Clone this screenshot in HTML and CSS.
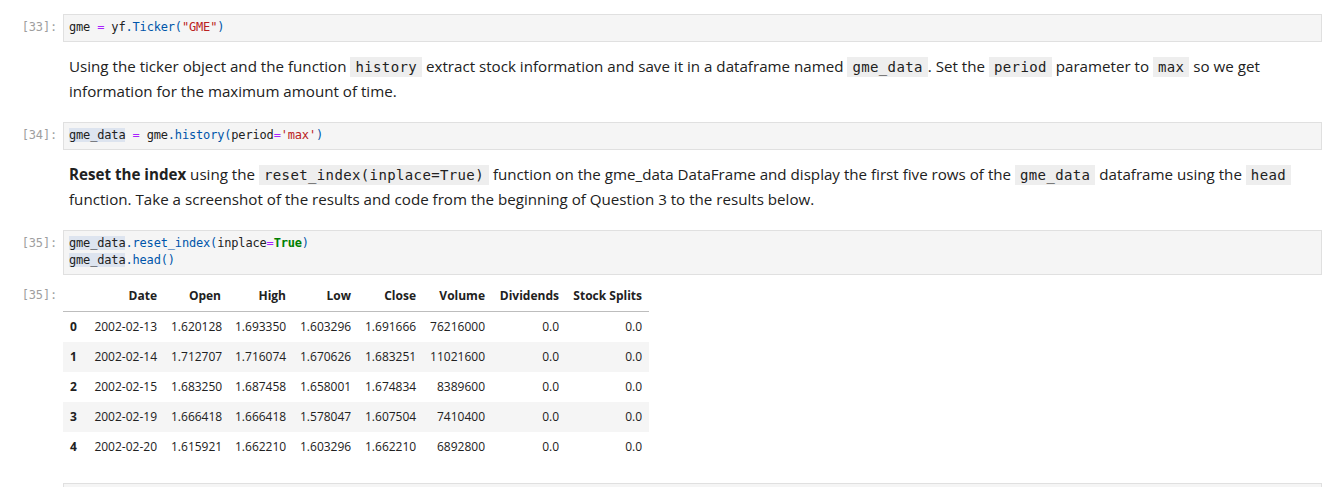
FILE: index.html
```html
<!DOCTYPE html>
<html lang="en">
<head>
<meta charset="utf-8">
<title>Notebook</title>
<link rel="stylesheet" href="styles.css">
</head>
<body>
<div class="notebook">

  <div class="cell code-cell">
    <div class="prompt">[33]:</div>
    <div class="input"><div class="line"><span class="v">gme</span> <span class="op">=</span> <span class="v">yf</span><span class="p">.</span><span class="pr">Ticker</span><span class="p">(</span><span class="s">"GME"</span><span class="p">)</span></div></div>
  </div>

  <div class="cell md-cell">
    <div class="prompt"></div>
    <div class="md"><p>Using the ticker object and the function <code>history</code> extract stock information and save it in a dataframe named <code>gme_data</code>. Set the <code>period</code> parameter to <code>max</code> so we get information for the maximum amount of time.</p></div>
  </div>

  <div class="cell code-cell">
    <div class="prompt">[34]:</div>
    <div class="input"><div class="line"><span class="v hl">gme_data</span> <span class="op">=</span> <span class="v">gme</span><span class="p">.</span><span class="pr">history</span><span class="p">(</span><span class="v">period</span><span class="op">=</span><span class="s">'max'</span><span class="p">)</span></div></div>
  </div>

  <div class="cell md-cell">
    <div class="prompt"></div>
    <div class="md"><p><strong>Reset the index</strong> using the <code>reset_index(inplace=True)</code> function on the gme_data DataFrame and display the first five rows of the <code>gme_data</code> dataframe using the <code>head</code> function. Take a screenshot of the results and code from the beginning of Question 3 to the results below.</p></div>
  </div>

  <div class="cell code-cell">
    <div class="prompt">[35]:</div>
    <div class="input"><div class="line"><span class="v hl">gme_data</span><span class="p">.</span><span class="pr">reset_index</span><span class="p">(</span><span class="v">inplace</span><span class="op">=</span><span class="kw">True</span><span class="p">)</span></div><div class="line"><span class="v hl">gme_data</span><span class="p">.</span><span class="pr">head</span><span class="p">()</span></div></div>
  </div>

  <div class="cell output-cell">
    <div class="prompt out-prompt">[35]:</div>
    <div class="output">
      <table class="df">
        <thead>
          <tr>
            <th class="c0"></th>
            <th class="c1">Date</th>
            <th class="c2">Open</th>
            <th class="c3">High</th>
            <th class="c4">Low</th>
            <th class="c5">Close</th>
            <th class="c6">Volume</th>
            <th class="c7">Dividends</th>
            <th class="c8">Stock Splits</th>
          </tr>
        </thead>
        <tbody>
          <tr><th>0</th><td>2002-02-13</td><td>1.620128</td><td>1.693350</td><td>1.603296</td><td>1.691666</td><td>76216000</td><td>0.0</td><td>0.0</td></tr>
          <tr><th>1</th><td>2002-02-14</td><td>1.712707</td><td>1.716074</td><td>1.670626</td><td>1.683251</td><td>11021600</td><td>0.0</td><td>0.0</td></tr>
          <tr><th>2</th><td>2002-02-15</td><td>1.683250</td><td>1.687458</td><td>1.658001</td><td>1.674834</td><td>8389600</td><td>0.0</td><td>0.0</td></tr>
          <tr><th>3</th><td>2002-02-19</td><td>1.666418</td><td>1.666418</td><td>1.578047</td><td>1.607504</td><td>7410400</td><td>0.0</td><td>0.0</td></tr>
          <tr><th>4</th><td>2002-02-20</td><td>1.615921</td><td>1.662210</td><td>1.603296</td><td>1.662210</td><td>6892800</td><td>0.0</td><td>0.0</td></tr>
        </tbody>
      </table>
    </div>
  </div>

  <div class="cell code-cell">
    <div class="prompt"></div>
    <div class="input"><div class="line"></div></div>
  </div>

</div>
</body>
</html>
```

FILE: styles.css
```css
* { box-sizing: border-box; }

html, body {
  margin: 0;
  padding: 0;
  background: #ffffff;
  overflow: hidden;
}

body {
  font-family: "Open Sans", "Noto Sans", sans-serif;
  color: #212121;
}

.notebook {
  padding: 14px 15px 0 0;
  width: 1337px;
}

.cell {
  display: flex;
  align-items: flex-start;
}

.prompt {
  flex: 0 0 63px;
  width: 63px;
  padding-right: 6px;
  text-align: right;
  font-family: "DejaVu Sans Mono", monospace;
  font-size: 12px;
  letter-spacing: -0.17px;
  line-height: 17px;
  color: #9e9e9e;
  padding-top: 5px;
}

.input {
  flex: 1;
  background: #f5f5f5;
  border: 1px solid #e0e0e0;
  padding: 4px 5px 5px;
  font-family: "DejaVu Sans Mono", monospace;
  font-size: 12px;
  letter-spacing: -0.17px;
  line-height: 17px;
  color: #212121;
}

.line {
  height: 17px;
  white-space: pre;
}

.v { color: #212121; }
.op { color: #aa22ff; }
.p { color: #0055aa; }
.pr { color: #0055aa; }
.s { color: #ba2121; }
.kw { color: #008000; font-weight: bold; }
.hl { background: #dde4ef; }

.md-cell {
  margin: 13px 0 19px;
}

.md {
  flex: 1;
  padding: 0 6px;
  font-size: 15.15px;
  line-height: 23.5px;
}

.md p { margin: 0; }

.md strong { font-weight: 700; }

.md code {
  font-family: "DejaVu Sans Mono", monospace;
  font-size: 14px;
  letter-spacing: 0.37px;
  background: #eeeeee;
  padding: 2px 5px;
  color: #212121;
}

.output-cell {
  margin: 6px 0 21px;
}

.out-prompt {
  padding-top: 6px;
}

.output {
  flex: 1;
}

.df {
  border-collapse: collapse;
  table-layout: fixed;
  width: 586px;
  font-size: 12px;
  color: #212121;
}

.df th, .df td {
  padding: 7px 7px;
  line-height: 16px;
  text-align: right;
  white-space: nowrap;
  font-weight: normal;
}

.df thead th {
  font-weight: bold;
  border-bottom: 1px solid #bdbdbd;
}

.df tbody th {
  font-weight: bold;
  text-align: left;
}

.df tbody tr:nth-child(even) { background: #f5f5f5; }

.c0 { width: 20px; }
.c1 { width: 81px; }
.c2 { width: 64px; }
.c3 { width: 65px; }
.c4 { width: 65px; }
.c5 { width: 65px; }
.c6 { width: 69px; }
.c7 { width: 74px; }
.c8 { width: 83px; }
```
